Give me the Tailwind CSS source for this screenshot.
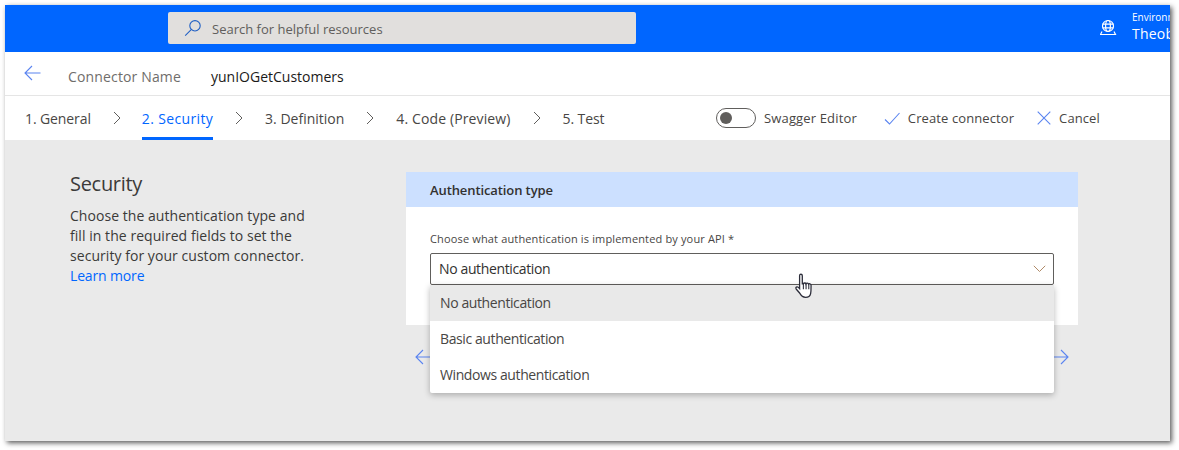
<!DOCTYPE html>
<html lang="en">
  <head>
    <meta charset="UTF-8" />
    <script src="https://cdn.jsdelivr.net/npm/@tailwindcss/browser@4"></script>
    <title>Security</title>
  </head>
  <body class="bg-white w-[1179px] h-[450px] overflow-hidden font-['Open_Sans',sans-serif]">
    <div class="ml-[5px] mt-[5px] w-[1165px] h-[436px] flex flex-col bg-[#eaeaea] overflow-hidden shadow-[2px_2px_5px_rgba(0,0,0,0.65)]">
      <!-- top bar -->
      <header class="h-[47px] shrink-0 bg-[#0066ff] flex items-center relative">
        <div class="ml-[163px] mt-[-1px] w-[468px] h-[32px] bg-[#e1dfdd] rounded-[2px] flex items-center pl-[16px] gap-[10px]">
          <svg class="w-[18px] h-[18px]" viewBox="0 0 18 18" fill="none" stroke="#1f5fc4" stroke-width="1.1"><circle cx="11" cy="6.8" r="5.2"/><path d="M7.2 10.6 1.2 16.6"/></svg>
          <span class="text-[13px] pt-[3px] tracking-[0px] text-[#605e5c]">Search for helpful resources</span>
        </div>
        <div class="absolute left-[1095px] top-0 h-[47px] w-[70px] overflow-hidden flex items-center text-white">
          <svg class="w-[18px] h-[18px] ml-[-1px] mt-[-1px] shrink-0" viewBox="0 0 18 18" fill="none" stroke="#fff" stroke-width="1.2"><circle cx="9" cy="7" r="5.5"/><ellipse cx="9" cy="7" rx="2.4" ry="5.5"/><path d="M3.5 5.2h11M3.500 8.800h11M3 12.500 1.500 15.500h15L15 12.500"/></svg>
          <div class="ml-[15px] flex flex-col whitespace-nowrap">
            <span class="text-[10px] leading-[13px] mt-[-2px]">Environment</span>
            <span class="text-[14px] leading-[20px] tracking-[0.2px]">Theobald</span>
          </div>
        </div>
      </header>

      <!-- connector name -->
      <div class="h-[44px] shrink-0 bg-white border-b border-[#e5e5e5] flex items-center">
        <svg class="ml-[19px] mt-[-2px] w-[17px] h-[16px]" viewBox="0 0 17 16" fill="none" stroke="#5a84f0" stroke-width="1.1"><path d="M16.500 8H1M8 1 1 8l7 7"/></svg>
        <span class="ml-[27px] pt-[6px] text-[14px] tracking-[0.15px] text-[#6f6d6b]">Connector Name</span>
        <span class="ml-[30px] pt-[6px] text-[14px] tracking-[0px] text-[#1b1a19]">yunIOGetCustomers</span>
      </div>

      <!-- tabs -->
      <nav class="h-[44px] shrink-0 bg-white flex items-center text-[14px] tracking-[0px] text-[#484644] relative">
        <span class="ml-[20px] tracking-[-0.1px]">1. General</span>
        <svg class="ml-[22px] w-[8px] h-[14px]" viewBox="0 0 8 14" fill="none" stroke="#605e5c"><path d="m1 1 6 6-6 6"/></svg>
        <div class="ml-[21px] h-full flex items-center border-b-[3px] border-[#0066ff] pt-[3px] text-[#0066ff] font-medium tracking-[0.35px]">2. Security</div>
        <svg class="ml-[22px] w-[8px] h-[14px]" viewBox="0 0 8 14" fill="none" stroke="#605e5c"><path d="m1 1 6 6-6 6"/></svg>
        <span class="ml-[22px]">3. Definition</span>
        <svg class="ml-[22px] w-[8px] h-[14px]" viewBox="0 0 8 14" fill="none" stroke="#605e5c"><path d="m1 1 6 6-6 6"/></svg>
        <span class="ml-[22px] tracking-[0.12px]">4. Code (Preview)</span>
        <svg class="ml-[22px] w-[8px] h-[14px]" viewBox="0 0 8 14" fill="none" stroke="#605e5c"><path d="m1 1 6 6-6 6"/></svg>
        <span class="ml-[22px] tracking-[-0.1px]">5. Test</span>
        <div class="absolute left-[711px] top-[12px] flex items-center text-[13px] tracking-[0.15px]">
          <div class="w-[40px] h-[20px] border border-[#605e5c] rounded-full flex items-center pl-[3px]"><div class="w-[12px] h-[12px] rounded-full bg-[#605e5c]"></div></div>
          <span class="ml-[8px] pt-[1px]">Swagger Editor</span>
          <svg class="ml-[27px] w-[16px] h-[13px]" viewBox="0 0 16 13" fill="none" stroke="#5a84f0" stroke-width="1.1"><path d="m1 7.500 4.500 4.500L15.500 1"/></svg>
          <span class="ml-[8px] pt-[1px] tracking-[0.1px]">Create connector</span>
          <svg class="ml-[23px] w-[14px] h-[14px]" viewBox="0 0 14 14" fill="none" stroke="#5a84f0" stroke-width="1.1"><path d="m.7.7 12.600 12.600M13.300.7.7 13.300"/></svg>
          <span class="ml-[8px] pt-[1px] tracking-[0.1px]">Cancel</span>
        </div>
      </nav>

      <!-- content -->
      <main class="flex-1 flex pt-[32px] relative">
        <section class="ml-[65px] w-[336px] text-[#3b3a39]">
          <h2 class="text-[20px] leading-[24px] tracking-[-0.3px]">Security</h2>
          <p class="mt-[10px] w-[245px] text-[14px] leading-[20px] tracking-[0.05px]">Choose the authentication type and fill in the required fields to set the security for your custom connector. <a class="text-[#0066ff] block tracking-[-0.15px]">Learn more</a></p>
        </section>
        <section class="w-[672px]">
          <div class="h-[35px] bg-[#cce0ff] flex items-center pl-[24px] pt-[2px] text-[13px] tracking-[-0.1px] font-semibold text-[#323130]">Authentication type</div>
          <div class="h-[118px] bg-white pt-[25px] px-[24px]">
            <div class="text-[11px] leading-[14px] tracking-[0.15px] text-[#484644]">Choose what authentication is implemented by your API *</div>
            <div class="mt-[7px] h-[32px] border border-[#605e5c] rounded-[2px] flex items-center justify-between pl-[8px] pr-[7px] text-[14px] tracking-[-0.37px] text-[#323130]">
              <span class="pb-[2px]">No authentication</span>
              <svg class="w-[13px] h-[8px]" viewBox="0 0 13 8" fill="none" stroke="#b08a68"><path d="m.8.800 5.700 5.700L12.200.800"/></svg>
            </div>
          </div>
          <div class="mt-[24px] flex justify-between pl-[9px] pr-[9px]">
            <svg class="w-[16px] h-[16px]" viewBox="0 0 16 16" fill="none" stroke="#5a84f0" stroke-width="1.1"><path d="M16 8H1M8 1 1 8l7 7"/></svg>
            <svg class="w-[16px] h-[16px]" viewBox="0 0 16 16" fill="none" stroke="#5a84f0" stroke-width="1.1"><path d="M0 8h15M8 1l7 7-7 7"/></svg>
          </div>
        </section>
        <!-- dropdown menu -->
        <ul class="absolute left-[425px] top-[145px] w-[624px] bg-white rounded-b-[2px] shadow-[0_2px_6px_rgba(0,0,0,0.28)] text-[14px] tracking-[-0.4px] text-[#484644]">
          <li class="h-[36px] bg-[#e9e9e9] flex items-center pl-[10px] pb-[2px]">No authentication</li>
          <li class="h-[36px] flex items-center pl-[10px] pb-[2px]">Basic authentication</li>
          <li class="h-[36px] flex items-center pl-[10px] pb-[2px]">Windows authentication</li>
        </ul>
        <!-- mouse pointer -->
        <svg class="absolute left-[789px] top-[133px] w-[22px] h-[27px]" viewBox="0 0 20 25" fill="#fff" stroke="#2c2d3a" stroke-width="1.2"><path d="M5 2.500c0-1.800 2.500-1.800 2.500 0V10l1 0c.3-1 2.200-1 2.400 0 .4-.8 2.200-.8 2.400.3.500-.6 2.200-.5 2.300.9 0 3 .1 5.500-.4 7.800-.5 2.300-2 3.500-4.700 3.500-3.200 0-4.200-1.800-5.500-4L1.800 14.800c-1-1.400.8-2.700 2-1.500L5 14.500z"/><path d="M8.500 10v5M11 10v5M13.500 10.500V15" fill="none" stroke-width="1"/></svg>
      </main>
    </div>
  </body>
</html>
